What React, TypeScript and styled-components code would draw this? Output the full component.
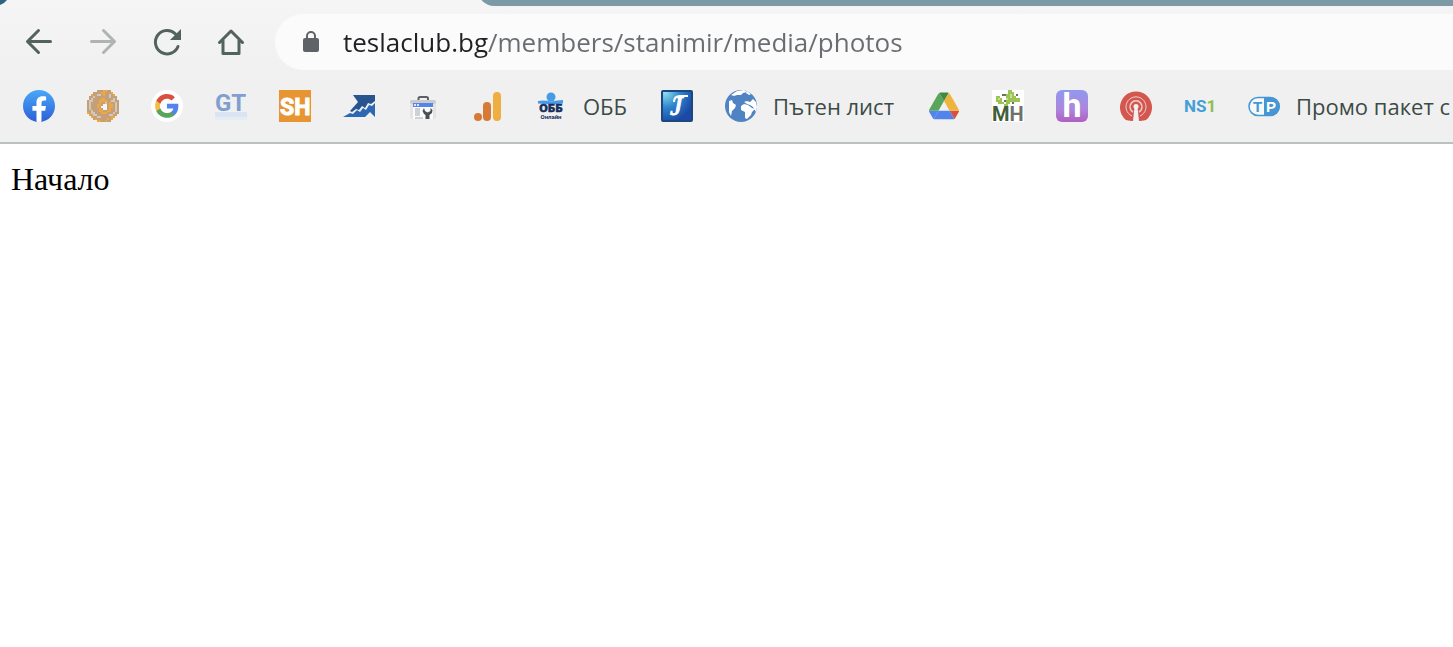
import React from "react";
import styled, { createGlobalStyle } from "styled-components";

const GlobalStyle = createGlobalStyle`
  * { box-sizing: border-box; }
  html, body { margin: 0; background: #ffffff; }
  body { overflow-x: hidden; }
`;

const uiFont = `"Open Sans", "Noto Sans", sans-serif`;
const logoFont = "Roboto, sans-serif";

const Chrome = styled.header`
  background: linear-gradient(#f5f5f5, #f0f0f0 80px);
  border-bottom: 2px solid #bbc1bf;
  font-family: ${uiFont};
`;

const TabStrip = styled.div`
  display: flex;
  justify-content: space-between;
  align-items: flex-end;
  height: 6px;
  overflow: hidden;
`;

const TabCorner = styled.svg`
  display: block;
  flex: none;
`;

const StripRest = styled.div`
  flex: 1;
  height: 16px;
  margin-left: 470px;
  border-bottom-left-radius: 16px;
  background: #7c9aa6;
`;

const Toolbar = styled.nav`
  display: flex;
  align-items: center;
  padding: 8px 0 6px 23px;
`;

const NavButton = styled.button<{ $muted?: boolean }>`
  flex: none;
  width: 32px;
  height: 32px;
  margin-right: 32px;
  padding: 0;
  border: 0;
  background: none;
  color: ${(p) => (p.$muted ? "#aeb4b2" : "#52625c")};
  &:last-of-type { margin-right: 28px; }
  svg { display: block; }
`;

const AddressBar = styled.label`
  display: flex;
  flex: 1;
  align-items: center;
  gap: 24px;
  height: 56px;
  padding-left: 28px;
  border-radius: 28px 0 0 28px;
  background: #fbfbfb;
  svg { flex: none; }
`;

const AddressInput = styled.input`
  flex: 1;
  min-width: 0;
  height: 40px;
  padding: 0;
  border: 0;
  outline: 0;
  font: 400 26px/40px ${uiFont};
  color: transparent;
  background: linear-gradient(90deg, #202124 145px, #696c70 145px);
  background-clip: text;
  -webkit-background-clip: text;
`;

const Bookmarks = styled.nav`
  display: flex;
  gap: 32px;
  height: 66px;
  padding: 14px 0 20px 23px;
  overflow: hidden;
`;

const Bookmark = styled.a<{ $labelled: boolean }>`
  display: flex;
  flex: none;
  align-items: center;
  gap: 16px;
  padding-right: ${(p) => (p.$labelled ? "2px" : "0")};
  color: #3c4b46;
  font-size: 22px;
  line-height: 32px;
  white-space: nowrap;
  text-decoration: none;
  svg { display: block; flex: none; }
`;

const Page = styled.main`
  padding: 16px 11px;
  color: #000000;
  font: 32px/38px "Liberation Serif", serif;
`;

const Glyph = ({ children }: { children: React.ReactNode }) => (
  <svg width="32" height="32" viewBox="0 0 32 32" aria-hidden="true">{children}</svg>
);

const Line = ({ d }: { d: string }) => (
  <path d={d} fill="none" stroke="currentColor" strokeWidth="3" strokeLinecap="round" strokeLinejoin="round" />
);

const Facebook = () => (
  <Glyph>
    <defs>
      <linearGradient id="fb" x2="0" y2="1"><stop stopColor="#4aa8f8" /><stop offset="1" stopColor="#2c5fd8" /></linearGradient>
    </defs>
    <circle cx="16" cy="16" r="15" fill="#fff" />
    <path transform="scale(1.3333)" fill="url(#fb)" d="M24 12.073c0-6.627-5.373-12-12-12s-12 5.373-12 12c0 5.99 4.388 10.954 10.125 11.854v-8.385H7.078v-3.47h3.047V9.43c0-3.007 1.792-4.669 4.533-4.669 1.312 0 2.686.235 2.686.235v2.953H15.83c-1.491 0-1.956.925-1.956 1.874v2.25h3.328l-.532 3.47h-2.796v8.385C19.612 23.027 24 18.062 24 12.073z" />
  </Glyph>
);

const rosetteRows = [
  ".....tttoott....",
  "...ttttoottto...",
  "..ottggtottgto..",
  ".ttgtttttttgttt.",
  ".tgttttoottttgt.",
  "tggtttoooottggtt",
  "tgttttottgtottgt",
  "tgtttootwwtootgt",
  "tgtttotwwwtootgt",
  "tgttttotwwtottgt",
  "ttgtttoottoottgt",
  "otggtttoootttgtt",
  ".otggttttttggtt.",
  "..ottggtttttoo..",
  "...totttttoto...",
  ".....oottott....",
];
const rosetteColors: Record<string, string> = { t: "#c3a078", o: "#efa645", g: "#d0c8be", w: "#f7f3ee" };

const Rosette = () => (
  <Glyph>
    {rosetteRows.flatMap((row, y) =>
      row.split("").map((c, x) =>
        c === "." ? null : (
          <rect key={`${x}-${y}`} x={x * 2} y={y * 2} width="2" height="2" fill={rosetteColors[c]} shapeRendering="crispEdges" />
        ),
      ),
    )}
  </Glyph>
);

const Google = () => (
  <Glyph>
    <circle cx="16" cy="16" r="16" fill="#fff" />
    <g transform="translate(3 3) scale(1.08)">
      <path fill="#5383ec" d="M22.56 12.25c0-.78-.07-1.53-.2-2.25H12v4.26h5.92c-.26 1.37-1.04 2.53-2.21 3.31v2.77h3.57c2.08-1.92 3.28-4.74 3.28-8.09z" />
      <path fill="#58a55c" d="M12 23c2.97 0 5.46-.98 7.28-2.66l-3.57-2.77c-.98.66-2.23 1.06-3.71 1.06-2.86 0-5.29-1.93-6.16-4.53H2.18v2.84C3.99 20.53 7.7 23 12 23z" />
      <path fill="#f1bd42" d="M5.84 14.09c-.22-.66-.35-1.36-.35-2.09s.13-1.43.35-2.09V7.07H2.18C1.43 8.55 1 10.22 1 12s.43 3.45 1.18 4.93l3.66-2.84z" />
      <path fill="#d95040" d="M12 5.38c1.62 0 3.06.56 4.21 1.64l3.15-3.15C17.45 2.09 14.97 1 12 1 7.7 1 3.99 3.47 2.18 7.07l3.66 2.84c.87-2.6 3.3-4.53 6.16-4.53z" />
    </g>
  </Glyph>
);

const GT = () => (
  <Glyph>
    <rect y="22" width="32" height="5" fill="#dbe5f2" />
    <rect y="27" width="32" height="3" fill="#e6ecf3" />
    <text x="0" y="21" fontFamily={logoFont} fontWeight="700" fontSize="24" fill="#7f9fd0">GT</text>
  </Glyph>
);

const SH = () => (
  <Glyph>
    <rect width="32" height="32" fill="#e69532" />
    <text x="1" y="25" fontFamily={logoFont} fontWeight="700" fontSize="23" fill="#fff" stroke="#fff">SH</text>
  </Glyph>
);

const Trend = () => (
  <Glyph>
    <path fill="#28548f" d="M10 5H32V11L28 14L25 13L22 18L19 16L16 20L13 19L9 22L7 21L15 12Z" />
    <path fill="#2d69b2" d="M0 27L7 23L10 24L14 20L17 22L20 18L23 20L26 15L29 16L32 13V27L27 22L22 27Z" />
  </Glyph>
);

const Toolbox = () => (
  <Glyph>
    <path d="M11.5 11V8.5Q11.5 7 13 7H19.5Q21 7 21 8.5V11" fill="none" stroke="#5d6063" strokeWidth="2" />
    <rect x="3" y="10" width="26" height="19" rx="2" fill="#e4e4e4" />
    <rect x="3" y="10" width="26" height="4" rx="2" fill="#cbcbcb" />
    <rect x="6" y="13" width="20" height="16" fill="#fbfbfb" />
    <rect x="6" y="13" width="20" height="4" fill="#5484ec" />
    <path d="M7 14h2v2H7zM10 14h2v2h-2z" fill="#dce7ff" />
    <path d="M8 18h5v8H8zM8 27h8v2H8z" fill="#cfd1d3" />
    <path d="M17 18L15.5 21L17 24L18.500 25V29H22.500V25L25 23L25.5 20L23.5 18V21L20.5 22.500L18 21Z" fill="#4b4e52" />
  </Glyph>
);

const Analytics = () => (
  <Glyph>
    <rect x="22" y="2" width="8" height="29" rx="4" fill="#eeae42" />
    <rect x="12" y="12" width="8" height="19" rx="4" fill="#d67b36" />
    <circle cx="7" cy="27" r="4" fill="#d67b36" />
  </Glyph>
);

const Obb = () => (
  <Glyph>
    <path d="M3 11Q9 10 16 11.500Q22 10 28 10V13.500Q16 15 3 13.500Z" fill="#469ae8" />
    <circle cx="16" cy="7" r="4.500" fill="#469ae8" />
    <text x="16" y="22" textAnchor="middle" fontFamily="DejaVu Sans, sans-serif" fontWeight="700" fontSize="10" fill="#152c5c" stroke="#152c5c" strokeWidth=".6">ОББ</text>
    <text x="16" y="29" textAnchor="middle" fontFamily={logoFont} fontWeight="700" fontSize="6" fill="#152c5c">Онлайн</text>
  </Glyph>
);

const Script = () => (
  <Glyph>
    <defs>
      <radialGradient id="js" cx=".1" cy=".05" r="1"><stop stopColor="#8ee0ee" /><stop offset=".5" stopColor="#2f86cf" /><stop offset="1" stopColor="#1b49a5" /></radialGradient>
    </defs>
    <rect x="1" y="1" width="30" height="30" rx="1" fill="url(#js)" stroke="#1c477f" strokeWidth="2" />
    <text x="9" y="25" fontFamily="Liberation Serif, serif" fontStyle="italic" fontSize="28" fill="#fff" stroke="#fff">J</text>
    <path d="M13 12Q13 6 19 6H27" fill="none" stroke="#fff" strokeWidth="2" />
  </Glyph>
);

const Globe = () => (
  <Glyph>
    <circle cx="16" cy="16" r="16" fill="#5083c4" />
    <path fill="#fff" d="M6 5L12 1L19 0L22 2L18 3L16 5L12 5L9 6ZM22 1L26 4L24 5L21 3ZM4 11L7 10L8 13L11 15L10 18L7 21L6 26L4 22ZM16 16L19 14L23 15L27 18L30 19L27 22L26 25L22 29L20 28L20 22L16 20ZM19 12L22 11L25 12L28 9L31 12L32 17L31 22L28 17L25 15L22 14Z" />
  </Glyph>
);

const Drive = () => (
  <Glyph>
    <g transform="translate(1 2.500) scale(.344)">
      <path fill="#5383ec" d="m6.600 66.850 3.850 6.650c.8 1.400 1.950 2.500 3.300 3.300l13.750-23.800h-27.500c0 1.550.4 3.100 1.200 4.500z" />
      <path fill="#58a55c" d="m43.650 25-13.750-23.800c-1.350.8-2.500 1.900-3.300 3.300l-25.400 44a9.060 9.060 0 0 0-1.200 4.500h27.500z" />
      <path fill="#d95040" d="m73.550 76.800c1.350-.8 2.500-1.900 3.300-3.300l9.250-16c.8-1.400 1.200-2.950 1.200-4.500h-27.500z" />
      <path fill="#3f8a46" d="m43.650 25 13.750-23.800c-1.350-.8-2.900-1.200-4.500-1.200h-18.500c-1.600 0-3.150.45-4.500 1.200z" />
      <path fill="#5383ec" d="m59.800 53h-32.300l-13.750 23.800c1.350.8 2.900 1.200 4.500 1.200h50.800c1.600 0 3.150-.45 4.500-1.200z" />
      <path fill="#efb440" d="m73.400 26.500-12.700-22c-.8-1.400-1.950-2.500-3.300-3.300l-13.750 23.800 16.150 28h27.450c0-1.550-.4-3.100-1.200-4.500z" />
    </g>
  </Glyph>
);

const Leaves = () => (
  <Glyph>
    <rect width="32" height="32" fill="#fff" />
    <text x="0" y="31" fontFamily={logoFont} fontWeight="700" fontSize="20"><tspan fill="#3f5f3c">M</tspan><tspan fill="#6f716d">H</tspan></text>
    <g shapeRendering="crispEdges">
      <path fill="#9cc455" d="M4 6h4v2h2v4h2v2H6v-2H4zM16 0h4v2h2v4h2v6h-6v2h-4V4h2zM24 8h4v4h-4zM12 14h4v2h-4z" />
      <path fill="#c6e08b" d="M6 8h2v2H6zM18 4h2v4h-2zM14 8h2v2h-2z" />
      <path fill="#66765a" d="M10 4h4v2h-4zM20 12h2v2h-2zM24 4h2v2h-2zM12 10h2v2h-2z" />
    </g>
  </Glyph>
);

const Purple = () => (
  <Glyph>
    <defs>
      <linearGradient id="hp" x2="0" y2="1"><stop stopColor="#9099ee" /><stop offset=".6" stopColor="#ab86dc" /><stop offset="1" stopColor="#b05fc5" /></linearGradient>
    </defs>
    <rect width="32" height="32" rx="6" fill="url(#hp)" />
    <text x="16" y="27" textAnchor="middle" fontFamily={logoFont} fontWeight="700" fontSize="34" fill="#fff">h</text>
  </Glyph>
);

const Beacon = () => (
  <Glyph>
    <path d="M6 30A16 16 0 1 1 26 30Q22 31 19 31H13Q10 31 6 30Z" fill="#d4574f" />
    <g fill="none" stroke="#f3cfcc">
      <path d="M12 26A10 10 0 1 1 20 26" />
      <path d="M13 22A6 6 0 1 1 19 22" strokeWidth="1.500" />
    </g>
    <circle cx="16" cy="16.500" r="2.500" fill="#f0f0f0" />
    <path d="M14.500 17H17.500L19 31H13Z" fill="#f0f0f0" />
  </Glyph>
);

const NS1 = () => (
  <Glyph>
    <text x="0" y="22" fontFamily={logoFont} fontWeight="700" fontSize="17" fill="#439fd8">
      NS<tspan fill="#8fbf4d">1</tspan>
    </text>
  </Glyph>
);

const TP = () => (
  <Glyph>
    <rect x="1" y="7.500" width="30" height="18" rx="9" fill="#f6f9fb" stroke="#4596d2" strokeWidth="1.500" />
    <path d="M16 7H22.500A9.500 9.500 0 0 1 22.500 26H16Z" fill="#4596d2" />
    <text y="22" fontFamily="Liberation Sans, sans-serif" fontWeight="700" fontSize="15"><tspan x="5" fill="#4596d2">T</tspan><tspan x="18" fill="#fff">P</tspan></text>
  </Glyph>
);

const bookmarks: { name: string; icon: React.ReactNode; label?: string }[] = [
  { name: "Facebook", icon: <Facebook /> },
  { name: "Rosette", icon: <Rosette /> },
  { name: "Google", icon: <Google /> },
  { name: "GT", icon: <GT /> },
  { name: "SH", icon: <SH /> },
  { name: "Trend", icon: <Trend /> },
  { name: "Toolbox", icon: <Toolbox /> },
  { name: "Analytics", icon: <Analytics /> },
  { name: "ОББ", icon: <Obb />, label: "ОББ" },
  { name: "J", icon: <Script /> },
  { name: "Пътен лист", icon: <Globe />, label: "Пътен лист" },
  { name: "Drive", icon: <Drive /> },
  { name: "MH", icon: <Leaves /> },
  { name: "h", icon: <Purple /> },
  { name: "Beacon", icon: <Beacon /> },
  { name: "NS1", icon: <NS1 /> },
  { name: "Промо пакет с", icon: <TP />, label: "Промо пакет с" },
];

export default function App() {
  return (
    <>
      <GlobalStyle />
      <Chrome>
        <TabStrip>
          <TabCorner width="8" height="6" aria-hidden="true"><path d="M0 0H7Q4 4 0 5Z" fill="#2f6383" /></TabCorner>
          <StripRest />
        </TabStrip>
        <Toolbar aria-label="Navigation">
          <NavButton aria-label="Back"><Glyph><Line d="M27.500 15.500H4.500M15.500 4.500L4.500 15.500L15.500 26.500" /></Glyph></NavButton>
          <NavButton aria-label="Forward" $muted><Glyph><Line d="M4.500 15.500H27.500M16.500 4.500L27.500 15.500L16.500 26.500" /></Glyph></NavButton>
          <NavButton aria-label="Reload">
            <Glyph>
              <Line d="M24.500 8A11.700 11.700 0 1 0 27 20.500" />
              <path d="M30 3V14H19Z" fill="currentColor" />
            </Glyph>
          </NavButton>
          <NavButton aria-label="Home"><Glyph><Line d="M4.500 16.500L16 5L27.500 16.500M8 14V27.500H24V14" /></Glyph></NavButton>
          <AddressBar>
            <svg width="16" height="22" viewBox="0 0 16 22" aria-hidden="true">
              <path d="M4 9V5a4 4 0 0 1 8 0V9" fill="none" stroke="#5f6368" strokeWidth="2" />
              <rect y="7" width="16" height="14" rx="2" fill="#5f6368" />
            </svg>
            <AddressInput aria-label="Address" defaultValue="teslaclub.bg/members/stanimir/media/photos" spellCheck={false} />
          </AddressBar>
        </Toolbar>
        <Bookmarks aria-label="Bookmarks">
          {bookmarks.map((b) => (
            <Bookmark key={b.name} href="#" aria-label={b.name} $labelled={Boolean(b.label)}>
              {b.icon}
              {b.label}
            </Bookmark>
          ))}
        </Bookmarks>
      </Chrome>
      <Page>Начало</Page>
    </>
  );
}
